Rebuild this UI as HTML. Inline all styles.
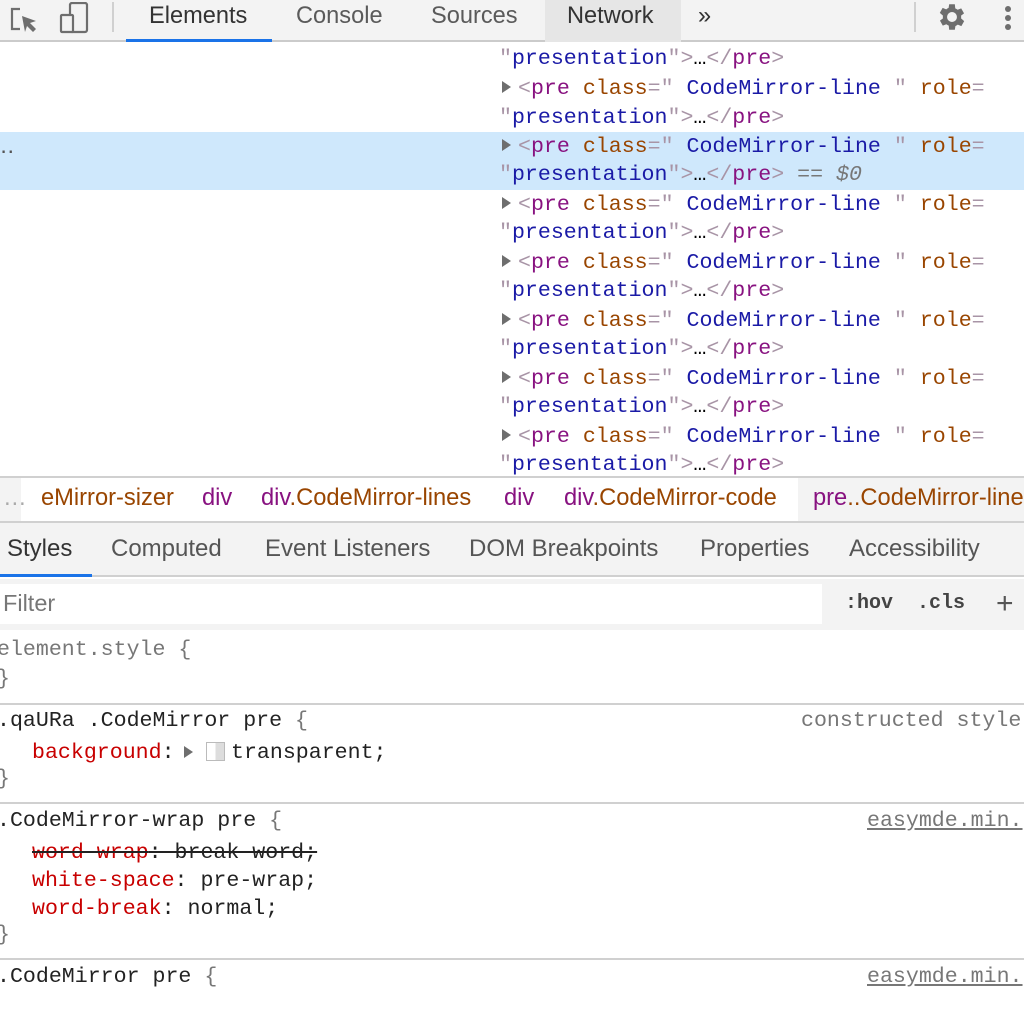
<!DOCTYPE html>
<html><head><meta charset="utf-8"><style>
*{margin:0;padding:0;box-sizing:border-box}
body{width:1024px;height:984px;overflow:hidden;background:#fff;position:relative;font-family:"Liberation Sans",Helvetica,sans-serif}
.abs{position:absolute}
.mono{font-family:"Liberation Mono",monospace;font-size:21.6px;white-space:pre;line-height:28px}
.tb{left:0;top:0;width:1024px;height:42px;background:#f3f3f3;border-bottom:2px solid #cbcbcb}
.tab{position:absolute;top:0;height:42px;line-height:32px;font-size:23.6px;color:#5a5a5a}
.tg{color:#881280}.pn{color:#a894a6}.an{color:#994500}.av{color:#1a1aa6}
.row{position:absolute;left:499px}
.arr{display:inline-block;width:0;height:0;border-top:6px solid transparent;border-bottom:6px solid transparent;border-left:9px solid #6e6e6e;margin:0 7px 0 3px;vertical-align:1px}
.sep{position:absolute;left:0;width:1024px;height:2px;background:#d0d0d0}
.crumb{font-size:23.7px;position:absolute;top:485px;white-space:nowrap}
.st{position:absolute;font-size:24px;color:#555;top:535px;white-space:nowrap}
.red{color:#c80000}.dk{color:#222}.gr{color:#777}
</style></head><body>
<div class="abs tb">
 <svg class="abs" style="left:8px;top:4px" width="32" height="30" viewBox="0 0 32 30"><path d="M12 5H4v20h8" fill="none" stroke="#6e6e6e" stroke-width="2.2"/><path d="M14 12l14 5-6 2 6 6-3 3-6-6-2 6z" fill="#6e6e6e"/></svg>
 <svg class="abs" style="left:58px;top:2px" width="32" height="32" viewBox="0 0 32 32"><rect x="12" y="1" width="17" height="29" rx="2" fill="none" stroke="#6e6e6e" stroke-width="2.2"/><rect x="3" y="13" width="12" height="17" rx="1" fill="#f3f3f3" stroke="#6e6e6e" stroke-width="2.2"/></svg>
 <div class="abs" style="left:112px;top:2px;width:2px;height:30px;background:#d0d0d0"></div>
 <div class="tab" style="left:149px;color:#333">Elements</div>
 <div class="abs" style="left:126px;top:39px;width:146px;height:3px;background:#1a73e8"></div>
 <div class="tab" style="left:296px">Console</div>
 <div class="tab" style="left:431px">Sources</div>
 <div class="abs" style="left:545px;top:0;width:136px;height:42px;background:#e6e6e6"></div>
 <div class="tab" style="left:567px;color:#333">Network</div>
 <div class="tab" style="left:698px;color:#333">»</div>
 <div class="abs" style="left:914px;top:2px;width:2px;height:30px;background:#d0d0d0"></div>
 <svg class="abs" style="left:934px;top:0px" width="36" height="34" viewBox="0 0 24 24"><path fill="#6e6e6e" d="M19.4 13a7.5 7.5 0 0 0 0-2l2.1-1.6-2-3.5-2.5 1a7 7 0 0 0-1.7-1L15 3h-4l-.4 2.6a7 7 0 0 0-1.7 1l-2.5-1-2 3.5L6.6 11a7.5 7.5 0 0 0 0 2l-2.1 1.6 2 3.5 2.5-1a7 7 0 0 0 1.7 1L11 21h4l.4-2.6a7 7 0 0 0 1.7-1l2.5 1 2-3.5zM13 15.5a3.5 3.5 0 1 1 0-7 3.5 3.5 0 0 1 0 7z" transform="translate(-1 0)"/></svg>
 <div class="abs" style="left:1005px;top:6px;width:6px;height:6px;border-radius:3px;background:#6e6e6e"></div>
 <div class="abs" style="left:1005px;top:15px;width:6px;height:6px;border-radius:3px;background:#6e6e6e"></div>
 <div class="abs" style="left:1005px;top:24px;width:6px;height:6px;border-radius:3px;background:#6e6e6e"></div>
</div>

<div class="abs" style="left:0;top:132px;width:1024px;height:58px;background:#cfe8fc"></div>
<div class="abs mono" style="left:0;top:134px;color:#555">‥</div>

<div class="mono">
<div class="row" style="top:45px"><span class="pn">"</span><span class="av">presentation</span><span class="pn">"&gt;</span>…<span class="pn">&lt;/</span><span class="tg">pre</span><span class="pn">&gt;</span></div>
<div class="row" style="top:75px"><span class="arr"></span><span class="pn">&lt;</span><span class="tg">pre</span> <span class="an">class</span><span class="pn">="</span> <span class="av">CodeMirror-line</span> <span class="pn">"</span> <span class="an">role</span><span class="pn">=</span></div>
<div class="row" style="top:104px"><span class="pn">"</span><span class="av">presentation</span><span class="pn">"&gt;</span>…<span class="pn">&lt;/</span><span class="tg">pre</span><span class="pn">&gt;</span></div>
<div class="row" style="top:133px"><span class="arr"></span><span class="pn">&lt;</span><span class="tg">pre</span> <span class="an">class</span><span class="pn">="</span> <span class="av">CodeMirror-line</span> <span class="pn">"</span> <span class="an">role</span><span class="pn">=</span></div>
<div class="row" style="top:161px"><span class="pn">"</span><span class="av">presentation</span><span class="pn">"&gt;</span>…<span class="pn">&lt;/</span><span class="tg">pre</span><span class="pn">&gt;</span> <span style="color:#777">==</span> <i style="color:#777">$0</i></div>
<div class="row" style="top:191px"><span class="arr"></span><span class="pn">&lt;</span><span class="tg">pre</span> <span class="an">class</span><span class="pn">="</span> <span class="av">CodeMirror-line</span> <span class="pn">"</span> <span class="an">role</span><span class="pn">=</span></div>
<div class="row" style="top:219px"><span class="pn">"</span><span class="av">presentation</span><span class="pn">"&gt;</span>…<span class="pn">&lt;/</span><span class="tg">pre</span><span class="pn">&gt;</span></div>
<div class="row" style="top:249px"><span class="arr"></span><span class="pn">&lt;</span><span class="tg">pre</span> <span class="an">class</span><span class="pn">="</span> <span class="av">CodeMirror-line</span> <span class="pn">"</span> <span class="an">role</span><span class="pn">=</span></div>
<div class="row" style="top:277px"><span class="pn">"</span><span class="av">presentation</span><span class="pn">"&gt;</span>…<span class="pn">&lt;/</span><span class="tg">pre</span><span class="pn">&gt;</span></div>
<div class="row" style="top:307px"><span class="arr"></span><span class="pn">&lt;</span><span class="tg">pre</span> <span class="an">class</span><span class="pn">="</span> <span class="av">CodeMirror-line</span> <span class="pn">"</span> <span class="an">role</span><span class="pn">=</span></div>
<div class="row" style="top:335px"><span class="pn">"</span><span class="av">presentation</span><span class="pn">"&gt;</span>…<span class="pn">&lt;/</span><span class="tg">pre</span><span class="pn">&gt;</span></div>
<div class="row" style="top:365px"><span class="arr"></span><span class="pn">&lt;</span><span class="tg">pre</span> <span class="an">class</span><span class="pn">="</span> <span class="av">CodeMirror-line</span> <span class="pn">"</span> <span class="an">role</span><span class="pn">=</span></div>
<div class="row" style="top:393px"><span class="pn">"</span><span class="av">presentation</span><span class="pn">"&gt;</span>…<span class="pn">&lt;/</span><span class="tg">pre</span><span class="pn">&gt;</span></div>
<div class="row" style="top:423px"><span class="arr"></span><span class="pn">&lt;</span><span class="tg">pre</span> <span class="an">class</span><span class="pn">="</span> <span class="av">CodeMirror-line</span> <span class="pn">"</span> <span class="an">role</span><span class="pn">=</span></div>
<div class="row" style="top:451px"><span class="pn">"</span><span class="av">presentation</span><span class="pn">"&gt;</span>…<span class="pn">&lt;/</span><span class="tg">pre</span><span class="pn">&gt;</span></div>
</div>

<!-- breadcrumb -->
<div class="sep" style="top:476px"></div>
<div class="abs" style="left:0;top:478px;width:1024px;height:44px;background:#f3f3f3"></div>
<div class="abs" style="left:21px;top:478px;width:777px;height:44px;background:#fff"></div>
<div class="crumb" style="left:3px;color:#aaa">…</div>
<div class="crumb" style="left:41px;color:#994500">eMirror-sizer</div>
<div class="crumb" style="left:202px;color:#881280">div</div>
<div class="crumb" style="left:261px;color:#881280">div<span style="color:#994500">.CodeMirror-lines</span></div>
<div class="crumb" style="left:504px;color:#881280">div</div>
<div class="crumb" style="left:564px;color:#881280">div<span style="color:#994500">.CodeMirror-code</span></div>
<div class="crumb" style="left:813px;color:#881280">pre<span style="color:#994500">..CodeMirror-line</span></div>
<div class="sep" style="top:521px"></div>

<!-- tabs -->
<div class="abs" style="left:0;top:523px;width:1024px;height:54px;background:#f3f3f3;border-bottom:2px solid #d0d0d0"></div>
<div class="st" style="left:7px;color:#333">Styles</div>
<div class="abs" style="left:0;top:574px;width:92px;height:3px;background:#1a73e8"></div>
<div class="st" style="left:111px">Computed</div>
<div class="st" style="left:265px">Event Listeners</div>
<div class="st" style="left:469px">DOM Breakpoints</div>
<div class="st" style="left:700px">Properties</div>
<div class="st" style="left:849px">Accessibility</div>

<!-- filter -->
<div class="abs" style="left:0;top:579px;width:1024px;height:51px;background:#f3f3f3"></div>
<div class="abs" style="left:0;top:584px;width:822px;height:40px;background:#fff"></div>
<div class="abs" style="left:3px;top:590px;font-size:23.5px;color:#777">Filter</div>
<div class="abs mono" style="left:845px;top:590px;font-weight:bold;color:#444;font-size:20px">:hov  .cls</div>
<div class="abs" style="left:996px;top:586px;font-size:30px;color:#555;line-height:36px">+</div>

<!-- styles -->
<div class="mono">
<div class="abs gr" style="left:-3px;top:636px">element.style {</div>
<div class="abs gr" style="left:-3px;top:665px">}</div>
<div class="sep" style="top:703px"></div>
<div class="abs dk" style="left:-3px;top:707px">.qaURa .CodeMirror pre <span class="gr">{</span></div>
<div class="abs gr" style="left:801px;top:707px">constructed style</div>
<div class="abs" style="left:32px;top:739px"><span class="red">background</span><span class="dk">:</span></div>
<div class="abs" style="left:184px;top:746px;width:0;height:0;border-top:6px solid transparent;border-bottom:6px solid transparent;border-left:9px solid #6e6e6e"></div>
<div class="abs" style="left:206px;top:742px;width:19px;height:19px;border:1px solid #bbb;background:linear-gradient(90deg,#fff 50%,#ddd 50%)"></div>
<div class="abs dk" style="left:231px;top:739px">transparent;</div>
<div class="abs gr" style="left:-3px;top:765px">}</div>
<div class="sep" style="top:802px"></div>
<div class="abs dk" style="left:-3px;top:807px">.CodeMirror-wrap pre <span class="gr">{</span></div>
<div class="abs gr" style="left:867px;top:807px;text-decoration:underline">easymde.min.</div>
<div class="abs" style="left:32px;top:839px;text-decoration:line-through;color:#222"><span class="red">word-wrap</span>: break-word;</div>
<div class="abs" style="left:32px;top:867px"><span class="red">white-space</span><span class="dk">: pre-wrap;</span></div>
<div class="abs" style="left:32px;top:895px"><span class="red">word-break</span><span class="dk">: normal;</span></div>
<div class="abs gr" style="left:-3px;top:921px">}</div>
<div class="sep" style="top:958px"></div>
<div class="abs dk" style="left:-3px;top:963px">.CodeMirror pre <span class="gr">{</span></div>
<div class="abs gr" style="left:867px;top:963px;text-decoration:underline">easymde.min.</div>
</div>
</body></html>
